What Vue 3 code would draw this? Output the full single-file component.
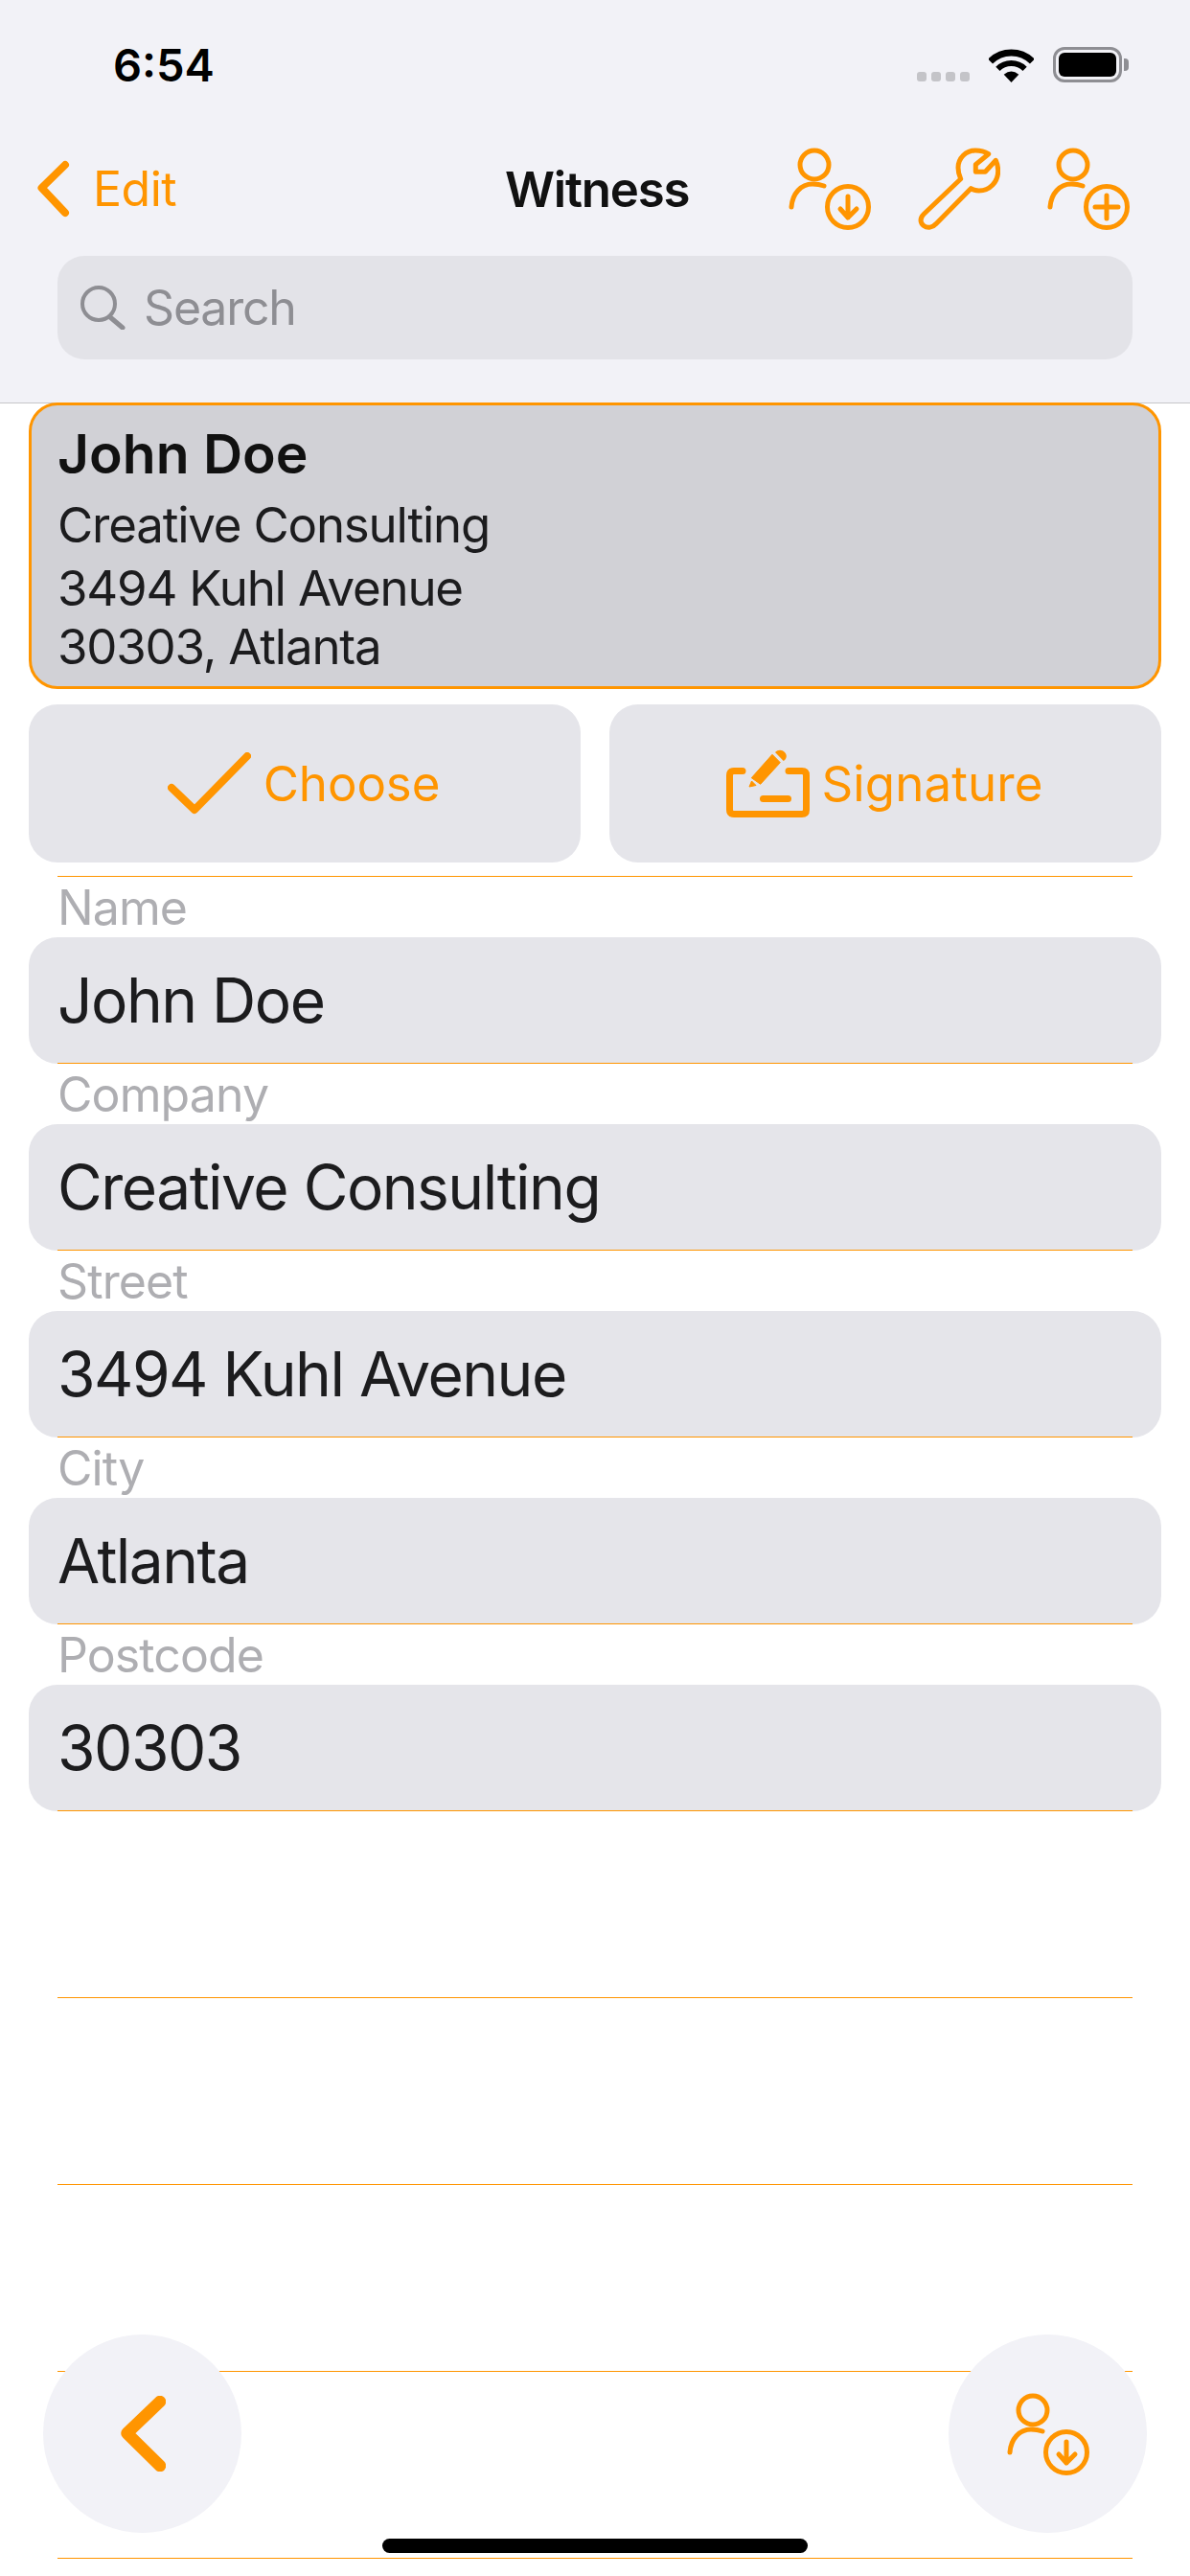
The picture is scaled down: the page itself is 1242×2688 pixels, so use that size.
<script setup>
const fields = [
  { label: 'Name', value: 'John Doe' },
  { label: 'Company', value: 'Creative Consulting' },
  { label: 'Street', value: '3494 Kuhl Avenue' },
  { label: 'City', value: 'Atlanta' },
  { label: 'Postcode', value: '30303' },
]
const blanks = [1, 2, 3, 4]
</script>

<template>
  <div class="app">
    <header class="head">
      <div class="status">
        <span class="time">6:54</span>
        <div class="status-right">
          <div class="dots"><i></i><i></i><i></i><i></i></div>
          <svg class="wifi" width="47" height="36" viewBox="0 0 47 36">
            <path d="M23.5 36 L15.7 27.8 Q23.5 21 31.3 27.8 Z" fill="#000" />
            <path d="M9.4 21.9 A20 20 0 0 1 37.6 21.9" fill="none" stroke="#000" stroke-width="6" />
            <path d="M1.6 14.1 A31 31 0 0 1 45.4 14.1" fill="none" stroke="#000" stroke-width="7" />
          </svg>
          <div class="battery"><div class="battery-body"><b></b></div><span></span></div>
        </div>
      </div>
      <nav class="nav">
        <div class="nav-left">
          <svg class="back" width="36" height="60" viewBox="0 0 36 60">
            <path d="M30 5 L5.500 29 L30 55" fill="none" stroke="#ff9500" stroke-width="8" stroke-linecap="round" stroke-linejoin="round" />
          </svg>
          <span class="edit">Edit</span>
        </div>
        <div class="title">Witness</div>
        <div class="nav-right">
          <svg width="86" height="86" viewBox="0 0 86 86" fill="none" stroke="#ff9500" stroke-width="5" stroke-linecap="round" stroke-linejoin="round">
            <circle cx="27" cy="18" r="15" />
            <path d="M3 62 C4 48 13 38 25 38 C29 38 33 38.500 37 40" />
            <circle cx="62" cy="62" r="21.500" />
            <path d="M62 51 V73 M54 64 L62 73 L71 64" />
          </svg>
          <svg width="86" height="86" viewBox="0 0 86 86" fill="none" stroke="#ff9500" stroke-width="5" stroke-linecap="round" stroke-linejoin="round">
            <path d="M73.700 6.700 C69 3.700 64 3 60 3 C50 3 42 11 42 21 C42 25 43 29 44.700 32.700 L6.300 69.300 C1.500 74 2.500 79 6 81.500 C10 84.500 15.500 83.500 19.300 79.300 L55.300 42.700 C58 44.500 61 45 63.700 45 C75 45 83.700 36 83.700 24.300 C83.700 20 82.500 16 81.300 13.300 L70.300 25.300 H60.300 V17.700 Z" />
          </svg>
          <svg width="86" height="86" viewBox="0 0 86 86" fill="none" stroke="#ff9500" stroke-width="5" stroke-linecap="round" stroke-linejoin="round">
            <circle cx="27" cy="18" r="15" />
            <path d="M3 62 C4 48 13 38 25 38 C29 38 33 38.500 37 40" />
            <circle cx="62" cy="62" r="21.500" />
            <path d="M50 62 H74 M62 50 V74" />
          </svg>
        </div>
      </nav>
      <div class="search">
        <svg width="47" height="46" viewBox="0 0 47 46" fill="none" stroke="#8e8e93" stroke-width="4" stroke-linecap="round">
          <circle cx="19" cy="19" r="17" />
          <path d="M31 33 L44 44" stroke-width="5" />
        </svg>
        <span>Search</span>
      </div>
    </header>

    <main class="content">
      <section class="card">
        <div class="card-name">John Doe</div>
        <div class="card-company">Creative Consulting</div>
        <div class="card-street">3494 Kuhl Avenue</div>
        <div class="card-city">30303, Atlanta</div>
      </section>

      <div class="actions">
        <div class="action">
          <svg width="87" height="66" viewBox="0 0 87 66" fill="none" stroke="#ff9500" stroke-width="8" stroke-linecap="round" stroke-linejoin="round">
            <path d="M4 37 L28 60 L83 4" />
          </svg>
          <span class="choose">Choose</span>
        </div>
        <div class="action">
          <svg width="87" height="71" viewBox="0 0 87 71">
            <path d="M17 22.500 H8 Q3.500 22.500 3.500 27 V63 Q3.500 67.500 8 67.500 H79 Q83.500 67.500 83.500 63 V27 Q83.500 22.500 79 22.500 H65" fill="none" stroke="#ff9500" stroke-width="7" stroke-linecap="round" />
            <rect x="35" y="48" width="33" height="7" rx="3.500" fill="#ff9500" />
            <path d="M26.300 29.700 L48 5.300 L56.300 13.700 L35.700 36.300 Z" fill="#ff9500" stroke="#ff9500" stroke-linejoin="round" />
            <path d="M24 39 L26.500 33 L31 37.500 Z" fill="#ff9500" stroke="#ff9500" stroke-linejoin="round" />
            <path d="M51 3 C54 0 58 0 61 3 C64 6 63 10 59.700 12 Z" fill="#ff9500" />
          </svg>
          <span>Signature</span>
        </div>
      </div>

      <div class="rule first"></div>

      <div v-for="f in fields" :key="f.label" class="field">
        <div class="label">{{ f.label }}</div>
        <div class="input">{{ f.value }}</div>
      </div>

      <div v-for="b in blanks" :key="b" class="blank"></div>
    </main>

    <button class="fab fab-left" type="button">
      <svg width="48" height="79" viewBox="0 0 48 79" fill="none" stroke="#ff9500" stroke-width="12.500" stroke-linecap="round" stroke-linejoin="round">
        <path d="M42 6 L7.500 39 L42 73" />
      </svg>
    </button>
    <button class="fab fab-right" type="button">
      <svg width="86" height="86" viewBox="0 0 86 86" fill="none" stroke="#ff9500" stroke-width="5" stroke-linecap="round" stroke-linejoin="round">
        <circle cx="27" cy="18" r="15" />
        <path d="M3 62 C4 48 13 38 25 38 C29 38 33 38.500 37 40" />
        <circle cx="62" cy="62" r="21.500" />
        <path d="M62 51 V73 M54 64 L62 73 L71 64" />
      </svg>
    </button>
    <div class="home"></div>
  </div>
</template>

<style>
html, body { margin: 0; background: #fff; }
</style>

<style scoped>
.app {
  position: relative;
  width: 1242px;
  height: 2688px;
  overflow: hidden;
  background: #fff;
  font-family: Inter, "Liberation Sans", sans-serif;
  font-weight: 375;
  color: #1c1c1e;
}
.head {
  height: 421px;
  box-sizing: border-box;
  background: #f2f2f7;
  border-bottom: 1px solid #c6c6c8;
  padding-top: 49px;
}
.status {
  display: flex;
  justify-content: space-between;
  align-items: center;
  height: 37px;
  padding: 0 64px 0 118px;
}
.time {
  font-size: 47px;
  font-weight: 600;
  color: #000;
  line-height: 37px;
}
.status-right {
  display: flex;
  align-items: center;
}
.dots {
  display: flex;
  gap: 5px;
  align-self: flex-end;
  margin-bottom: 1px;
  margin-right: 20px;
}
.dots i {
  width: 10px;
  height: 10px;
  border-radius: 3px;
  background: #c4c4c8;
}
.battery {
  display: flex;
  align-items: center;
  margin-left: 20px;
}
.battery-body {
  box-sizing: border-box;
  width: 72px;
  height: 37px;
  border: 3px solid #8e8e93;
  border-radius: 12px;
  padding: 3px;
}
.battery-body b {
  display: block;
  height: 100%;
  background: #000;
  border-radius: 6px;
}
.battery span {
  width: 5px;
  height: 13px;
  margin-left: 2px;
  background: #8e8e93;
  border-radius: 0 4px 4px 0;
}
.nav {
  display: grid;
  grid-template-columns: 489px 190px 1fr;
  align-items: center;
  height: 86px;
  margin-top: 68px;
  padding: 0 63px 0 38px;
}
.nav-left {
  display: flex;
  align-items: center;
  gap: 23px;
}
.edit {
  font-size: 50px;
  letter-spacing: -0.5px;
  color: #ff9500;
}
.title {
  font-size: 51px;
  font-weight: 600;
  letter-spacing: -1.2px;
  color: #111;
  text-align: center;
  white-space: nowrap;
}
.nav-right {
  display: flex;
  justify-content: flex-end;
  gap: 49px;
}
.search {
  display: flex;
  align-items: center;
  gap: 19px;
  box-sizing: border-box;
  height: 108px;
  margin: 27px 60px 0;
  padding-left: 24px;
  background: #e3e3e8;
  border-radius: 28px;
  font-size: 50px;
  letter-spacing: -1.2px;
  color: #8e8e93;
}
.content {
  margin-top: -1px;
}
.card {
  box-sizing: border-box;
  height: 299px;
  margin: 0 30px;
  padding: 18px 0 0 27px;
  background: #d1d1d6;
  border: 3px solid #ff9500;
  border-radius: 30px;
  font-size: 51px;
  letter-spacing: -1.2px;
  line-height: 60px;
}
.card-name {
  font-size: 57px;
  font-weight: 600;
  letter-spacing: 0;
  color: #111;
  line-height: 66px;
}
.card-company { margin-top: 11px; }
.card-street { margin-top: 6px; }
.card-city { margin-top: 1px; }
.actions {
  display: flex;
  gap: 30px;
  margin: 16px 30px 0;
}
.action {
  flex: 1;
  height: 165px;
  box-sizing: border-box;
  padding-right: 2px;
  display: flex;
  align-items: center;
  justify-content: center;
  gap: 13px;
  background: #e5e5ea;
  border-radius: 30px;
  font-size: 51px;
  letter-spacing: 0.1px;
  color: #ff9500;
}
.choose {
  letter-spacing: -0.1px;
}
.rule.first {
  height: 1px;
  margin: 14px 60px 0;
  background: #ff9500;
}
.field {
  height: 195px;
  box-sizing: border-box;
  display: flex;
  flex-direction: column;
}
.label {
  flex: 1;
  display: flex;
  align-items: center;
  padding-left: 60px;
  font-size: 50px;
  letter-spacing: -0.9px;
  color: #aeaeb2;
}
.input {
  position: relative;
  height: 132px;
  margin: 0 30px;
  padding-left: 30px;
  background: #e5e5ea;
  border-radius: 30px;
  font-size: 64px;
  letter-spacing: -1.5px;
  line-height: 132px;
}
.input::after {
  content: "";
  position: absolute;
  left: 30px;
  right: 30px;
  bottom: 0;
  height: 1px;
  background: #ff9500;
}
.blank {
  height: 195px;
  box-sizing: border-box;
  margin: 0 60px;
  border-bottom: 1px solid #ff9500;
}
.fab {
  position: absolute;
  top: 2436px;
  width: 207px;
  height: 207px;
  padding: 0;
  border: none;
  border-radius: 50%;
  background: #f2f2f7;
  display: flex;
  align-items: center;
  justify-content: center;
}
.fab-left { left: 45px; }
.fab-right { left: 990px; }
.home {
  position: absolute;
  left: 399px;
  top: 2649px;
  width: 444px;
  height: 15px;
  border-radius: 8px;
  background: #000;
}
</style>
